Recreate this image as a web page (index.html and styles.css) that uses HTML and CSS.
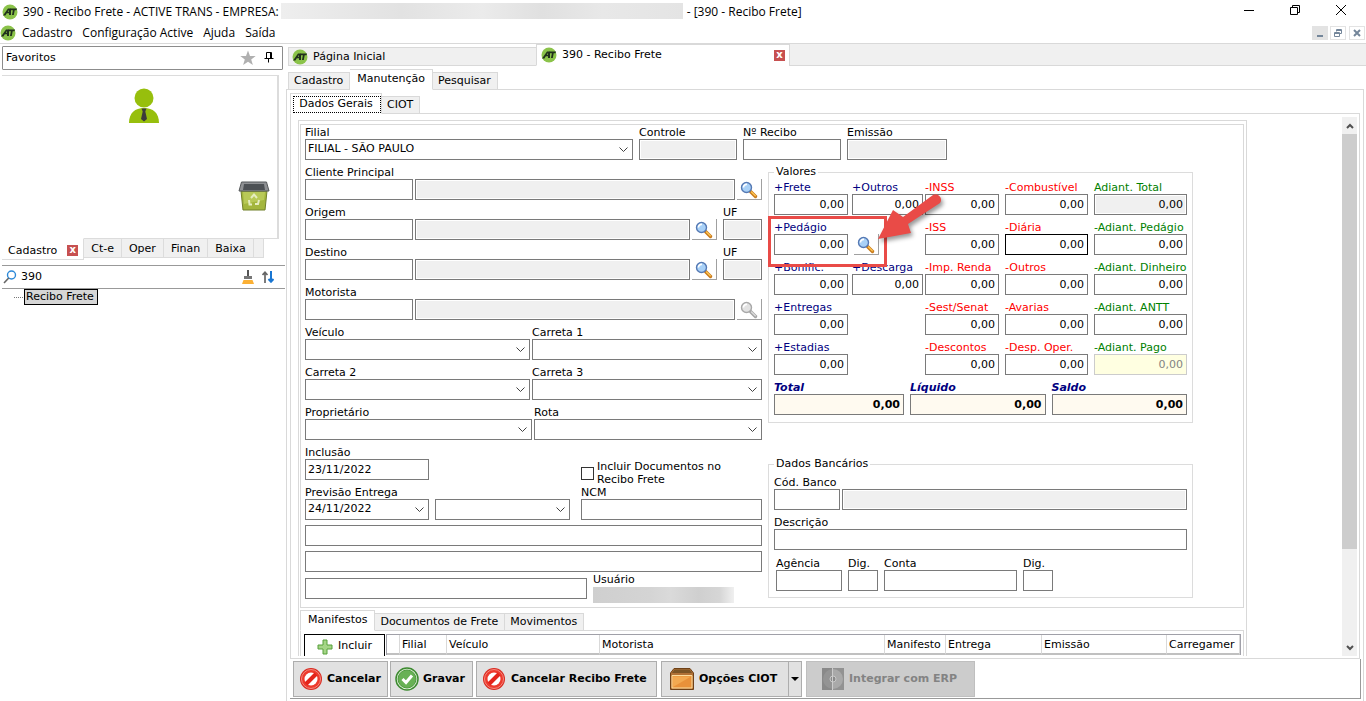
FILE: index.html
```html
<!DOCTYPE html>
<html lang="pt-BR">
<head>
    <meta charset="UTF-8">
    <meta name="viewport" content="width=device-width, initial-scale=1.0">
    <title>390 - Recibo Frete</title>
    <link rel="stylesheet" href="styles.css">
</head>
<body>
    <!-- shared icons -->
    <svg class="sprite" aria-hidden="true">
        <symbol id="logo" viewBox="0 0 16 16">
            <circle cx="8" cy="8" r="7.5" fill="#8bc34a"/>
            <path d="M1 11.5L6 4.500H9V11H7V9.300H4.800L3.400 11.500ZM5.800 7.800H7V6Z" fill="#20301c"/>
            <path d="M8.500 4.500H15L14.500 6.300H12.700L11.800 11H10L10.900 6.300H8.300Z" fill="#20301c"/>
        </symbol>
        <symbol id="lupa" viewBox="0 0 18 18">
            <path d="M10.500 10.500L15.500 15.500" stroke="#c87a1c" stroke-width="3.400" stroke-linecap="round"/>
            <path d="M11.500 11L15.300 14.800" stroke="#ffc653" stroke-width="1.300" stroke-linecap="round"/>
            <circle cx="6.500" cy="6.500" r="5" fill="#a9d1f7" stroke="#5579b4" stroke-width="1.400"/>
            <path d="M3.500 6.500A3 3 0 0 1 7 3.400" stroke="#fff" stroke-width="1.600" fill="none"/>
        </symbol>
        <symbol id="lupa-off" viewBox="0 0 18 18">
            <path d="M10.500 10.500L15.500 15.500" stroke="#a5a5a5" stroke-width="3.400" stroke-linecap="round"/>
            <path d="M11.500 11L15.300 14.800" stroke="#dcdcdc" stroke-width="1.300" stroke-linecap="round"/>
            <circle cx="6.500" cy="6.500" r="5" fill="#e2e2e2" stroke="#a8a8a8" stroke-width="1.400"/>
            <path d="M3.500 6.500A3 3 0 0 1 7 3.400" stroke="#fff" stroke-width="1.600" fill="none"/>
        </symbol>
        <symbol id="proibido" viewBox="0 0 24 24">
            <circle cx="12" cy="12" r="11" fill="#d92a20"/>
            <circle cx="12" cy="12" r="9.500" fill="#ee3a2d" stroke="#f58a80" stroke-width="1"/>
            <circle cx="12" cy="12" r="6.500" fill="#fff"/>
            <path d="M7 17L17 7" stroke="#e3241b" stroke-width="4"/>
        </symbol>
    </svg>

    <header class="titlebar">
        <svg class="logo"><use href="#logo"/></svg>
        <span>390 - Recibo Frete - ACTIVE TRANS - EMPRESA:</span>
        <span class="redacted"></span>
        <span>- [390 - Recibo Frete]</span>
        <div class="window-buttons">
            <button type="button" aria-label="Minimizar"><svg viewBox="0 0 12 12"><path d="M1 6.500H11"/></svg></button>
            <button type="button" aria-label="Restaurar"><svg viewBox="0 0 12 12"><path d="M1.500 3.500H8.500V10.500H1.500ZM3.500 3.500V1.500H10.500V8.500H8.500"/></svg></button>
            <button type="button" aria-label="Fechar"><svg viewBox="0 0 12 12"><path d="M1 1L11 11M11 1L1 11"/></svg></button>
        </div>
    </header>

    <nav class="menubar">
        <svg class="logo"><use href="#logo"/></svg>
        <a href="#">Cadastro</a>
        <a href="#">Configuração Active</a>
        <a href="#">Ajuda</a>
        <a href="#">Saída</a>
        <div class="mdi-buttons">
            <button type="button" class="flat" aria-label="Minimizar janela"><svg viewBox="0 0 12 12"><path d="M3 9H9"/></svg></button>
            <button type="button" aria-label="Restaurar janela"><svg viewBox="0 0 12 12"><path class="thin" d="M2.500 5.500H7.500V9.500H2.500ZM2.500 6.500H7.500M4.500 4.500V2.500H9.500V6.500H8M4.500 3.500H9.500"/></svg></button>
            <button type="button" class="last" aria-label="Fechar janela"><svg viewBox="0 0 12 12"><path d="M3 3L9 9M9 3L3 9"/></svg></button>
        </div>
    </nav>

    <main class="workspace">
        <aside class="sidebar">
            <div class="favorites-title">
                <span>Favoritos</span>
                <svg class="star" viewBox="0 0 16 16"><path d="M8 0.500L10 6H15.700L11.200 9.400L12.900 15L8 11.700L3.100 15L4.800 9.400L0.300 6H6Z" fill="#b0b0b0"/></svg>
                <svg class="pin" viewBox="0 0 10 12"><path d="M2.500 7.500V1.500H7.500V7.500M6.500 1.500V7.500M0.500 7.500H9.500M4.500 8V11.500" fill="none" stroke="#000"/></svg>
            </div>
            <div class="favorites">
                <svg class="person" viewBox="0 0 30 36">
                    <circle cx="15" cy="10" r="9.500" fill="#97bf0d"/>
                    <path d="M0 35C0 25 6 20 15 20S30 25 30 35Z" fill="#97bf0d"/>
                    <path d="M12.500 20.500H17.500L16.300 23.500L18 31L15 33.500L12 31L13.700 23.500Z" fill="#3c3c3b"/>
                </svg>
                <svg class="bin" viewBox="0 0 32 32">
                    <path d="M3 11H29L27 30H5Z" fill="#a3b63d" stroke="#71802a"/>
                    <path d="M5 12H27L26 20L6 24Z" fill="#b8c957"/>
                    <path d="M3.500 2H28.500L31 11H1Z" fill="#8f9194" stroke="#55585a"/>
                    <path d="M6 4H26L27 10H5Z" fill="#4d5155"/>
                    <path d="M13 18L16 14.500L19 18M21 20L20 24H17M14 24.500H11.500L11 20" fill="none" stroke="#e6edc0" stroke-width="2"/>
                </svg>
            </div>
            <div class="group-tabs">
                <button type="button" class="active">Cadastro <span class="close">x</span></button>
                <button type="button">Ct-e</button>
                <button type="button">Oper</button>
                <button type="button">Finan</button>
                <button type="button">Baixa</button>
                <span class="tab-end"></span>
            </div>
            <div class="search">
                <svg class="search-icon" viewBox="0 0 14 14"><circle cx="8.500" cy="5" r="4" fill="none" stroke="#2b88d8" stroke-width="1.400"/><path d="M5.700 8L1 13" stroke="#666" stroke-width="1.600"/></svg>
                <input type="text" aria-label="Buscar" value="390">
                <svg class="broom" viewBox="0 0 12 14"><path d="M6 0V6" stroke="#555" stroke-width="2"/><path d="M2 6H10V9H2Z" fill="#777"/><path d="M1.500 10H10.500L12 14H0Z" fill="#fbb034"/></svg>
                <svg class="sort" viewBox="0 0 12 12"><path d="M3 12V1.500M0.500 4L3 1.300L5.500 4" fill="none" stroke="#666" stroke-width="1.700"/><path d="M9 0V10.500M6.500 8L9 10.700L11.500 8" fill="none" stroke="#1976d2" stroke-width="2"/></svg>
            </div>
            <div class="tree"><span class="branch"></span><a href="#">Recibo Frete</a></div>
        </aside>

        <section class="content">
            <div class="doc-tabs">
                <button type="button"><svg class="logo"><use href="#logo"/></svg>Página Inicial</button>
                <button type="button" class="active"><svg class="logo"><use href="#logo"/></svg>390 - Recibo Frete<span class="close">x</span></button>
                <span class="filler"></span>
            </div>
            <div class="tabs">
                <button type="button">Cadastro</button>
                <button type="button" class="active">Manutenção</button>
                <button type="button">Pesquisar</button>
            </div>
            <div class="frame">
                <div class="tabs sub">
                    <button type="button" class="active focus">Dados Gerais</button>
                    <button type="button">CIOT</button>
                </div>
                <div class="page">
                    <div class="viewport">
                        <div class="sheet">
                            <form class="form">
                                <div class="row wide">
                                    <label class="w-filial">Filial<select><option>FILIAL - SÃO PAULO</option></select></label>
                                    <label class="w-small">Controle<input type="text" readonly></label>
                                    <label class="w-small">Nº Recibo<input type="text"></label>
                                    <label class="w-date">Emissão<input type="text" readonly></label>
                                </div>
                                <div class="columns">
                                    <div class="left">
                                        <div class="row">
                                            <label class="w-code">Cliente Principal<input type="text"></label>
                                            <input class="grow" type="text" aria-label="Nome do cliente" readonly>
                                            <button type="button" class="find" aria-label="Procurar cliente"><svg><use href="#lupa"/></svg></button>
                                        </div>
                                        <div class="row">
                                            <label class="w-code">Origem<input type="text"></label>
                                            <input class="grow" type="text" aria-label="Cidade de origem" readonly>
                                            <button type="button" class="find" aria-label="Procurar origem"><svg><use href="#lupa"/></svg></button>
                                            <label class="w-uf">UF<input type="text" readonly></label>
                                        </div>
                                        <div class="row">
                                            <label class="w-code">Destino<input type="text"></label>
                                            <input class="grow" type="text" aria-label="Cidade de destino" readonly>
                                            <button type="button" class="find" aria-label="Procurar destino"><svg><use href="#lupa"/></svg></button>
                                            <label class="w-uf">UF<input type="text" readonly></label>
                                        </div>
                                        <div class="row">
                                            <label class="w-code">Motorista<input type="text"></label>
                                            <input class="grow" type="text" aria-label="Nome do motorista" readonly>
                                            <button type="button" class="find" aria-label="Procurar motorista" disabled><svg><use href="#lupa-off"/></svg></button>
                                        </div>
                                        <div class="row">
                                            <label class="w-combo">Veículo<select></select></label>
                                            <label class="grow">Carreta 1<select></select></label>
                                        </div>
                                        <div class="row">
                                            <label class="w-combo">Carreta 2<select></select></label>
                                            <label class="grow">Carreta 3<select></select></label>
                                        </div>
                                        <div class="row">
                                            <label class="w-owner">Proprietário<select></select></label>
                                            <label class="grow">Rota<select></select></label>
                                        </div>
                                        <div class="row include">
                                            <label class="w-day">Inclusão<input type="text" value="23/11/2022"></label>
                                            <label class="check w-ncm"><input type="checkbox"><span>Incluir Documentos no Recibo Frete</span></label>
                                        </div>
                                        <div class="row spaced">
                                            <label class="w-day">Previsão Entrega<select><option>24/11/2022</option></select></label>
                                            <select class="w-period" aria-label="Período"></select>
                                            <label class="w-ncm">NCM<input type="text"></label>
                                        </div>
                                        <input type="text" aria-label="Observação 1">
                                        <input type="text" aria-label="Observação 2">
                                        <div class="row user-row">
                                            <input class="w-note" type="text" aria-label="Observação 3">
                                            <div class="user">Usuário<span class="redacted"></span></div>
                                        </div>
                                    </div>
                                    <div class="right">
                                        <fieldset class="values">
                                            <legend>Valores</legend>
                                            <div class="grid">
                                                <label class="plus">+Frete<input type="text" value="0,00"></label>
                                                <label class="plus c2">+Outros<input type="text" value="0,00"></label>
                                                <label class="minus c3">-INSS<input type="text" value="0,00"></label>
                                                <label class="minus c4">-Combustível<input type="text" value="0,00"></label>
                                                <label class="adv">Adiant. Total<input type="text" value="0,00" readonly></label>

                                                <label class="plus">+Pedágio<input type="text" value="0,00"></label>
                                                <button type="button" class="find" aria-label="Procurar pedágio"><svg><use href="#lupa"/></svg></button>
                                                <label class="minus c3">-ISS<input type="text" value="0,00"></label>
                                                <label class="minus c4 current">-Diária<input type="text" value="0,00"></label>
                                                <label class="adv">-Adiant. Pedágio<input type="text" value="0,00"></label>

                                                <label class="plus">+Bonific.<input type="text" value="0,00"></label>
                                                <label class="plus c2">+Descarga<input type="text" value="0,00"></label>
                                                <label class="minus c3">-Imp. Renda<input type="text" value="0,00"></label>
                                                <label class="minus c4">-Outros<input type="text" value="0,00"></label>
                                                <label class="adv">-Adiant. Dinheiro<input type="text" value="0,00"></label>

                                                <label class="plus">+Entregas<input type="text" value="0,00"></label>
                                                <label class="minus c3">-Sest/Senat<input type="text" value="0,00"></label>
                                                <label class="minus c4">-Avarias<input type="text" value="0,00"></label>
                                                <label class="adv">-Adiant. ANTT<input type="text" value="0,00"></label>

                                                <label class="plus">+Estadias<input type="text" value="0,00"></label>
                                                <label class="minus c3">-Descontos<input type="text" value="0,00"></label>
                                                <label class="minus c4">-Desp. Oper.<input type="text" value="0,00"></label>
                                                <label class="adv">-Adiant. Pago<input type="text" value="0,00" disabled></label>
                                            </div>
                                            <div class="totals">
                                                <label class="total">Total<input type="text" value="0,00"></label>
                                                <label>Líquido<input type="text" value="0,00"></label>
                                                <label>Saldo<input type="text" value="0,00"></label>
                                            </div>
                                            <div class="highlight"></div>
                                            <svg class="arrow" viewBox="0 0 76 60"><path d="M3 49L18 20L28 27L58 5A5.500 5.500 0 0 1 65 13L33 34L36 43Z" fill="#e94b47"/></svg>
                                        </fieldset>
                                        <fieldset class="bank">
                                            <legend>Dados Bancários</legend>
                                            <div class="row">
                                                <label class="w-bank">Cód. Banco<input type="text"></label>
                                                <input class="grow" type="text" aria-label="Nome do banco" readonly>
                                            </div>
                                            <label>Descrição<input type="text"></label>
                                            <div class="row spaced account">
                                                <label class="w-bank">Agência<input type="text"></label>
                                                <label class="w-digit">Dig.<input type="text"></label>
                                                <label class="w-account">Conta<input type="text"></label>
                                                <label class="w-digit">Dig.<input type="text"></label>
                                            </div>
                                        </fieldset>
                                    </div>
                                </div>
                            </form>
                            <div class="tabs lower">
                                <button type="button" class="active">Manifestos</button>
                                <button type="button">Documentos de Frete</button>
                                <button type="button">Movimentos</button>
                            </div>
                            <div class="manifests">
                                <button type="button" class="add">
                                    <svg viewBox="0 0 16 16"><path d="M6 1H10V6H15V10H10V15H6V10H1V6H6Z" fill="#a5d587" stroke="#57a03a"/></svg>Incluir
                                </button>
                                <table>
                                    <colgroup><col class="c-mark"><col class="c-filial"><col class="c-vehicle"><col><col class="c-manifest"><col class="c-delivery"><col class="c-issue"><col class="c-load"></colgroup>
                                    <thead>
                                        <tr><th></th><th>Filial</th><th>Veículo</th><th>Motorista</th><th>Manifesto</th><th>Entrega</th><th>Emissão</th><th>Carregamer</th></tr>
                                    </thead>
                                </table>
                            </div>
                        </div>
                    </div>
                    <div class="scrollbar">
                        <button type="button" aria-label="Rolar para cima"><svg viewBox="0 0 8 6"><path d="M1 5L4 2L7 5"/></svg></button>
                        <span class="thumb"></span>
                        <button type="button" aria-label="Rolar para baixo"><svg viewBox="0 0 8 6"><path d="M1 1L4 4L7 1"/></svg></button>
                    </div>
                </div>
                <div class="actions">
                    <button type="button" class="cancel"><svg viewBox="0 0 24 24"><use href="#proibido"/></svg>Cancelar</button>
                    <button type="button" class="save"><svg viewBox="0 0 24 24"><circle cx="12" cy="12" r="11" fill="#e6f3df" stroke="#3c8a2f" stroke-width="1.500"/><circle cx="12" cy="12" r="9" fill="#68b155" stroke="#4d9a3e"/><path d="M7.500 12L11 15.500L17 8.500" fill="none" stroke="#fff" stroke-width="3"/></svg>Gravar</button>
                    <button type="button" class="cancel-receipt"><svg viewBox="0 0 24 24"><use href="#proibido"/></svg>Cancelar Recibo Frete</button>
                    <div class="split">
                        <button type="button" class="options"><svg viewBox="0 0 24 24"><path d="M4 1.500H20L23.500 6V22.500H0.500V6Z" fill="#b07136" stroke="#6f4117"/><path d="M4.500 2.500H19.500L22 6H2Z" fill="#7a5426"/><path d="M2 8.500H22V21H2Z" fill="#e8913a" stroke="#fbdc9e"/><path d="M3 9.500H21L3 20Z" fill="#f2a951"/></svg>Opções CIOT</button>
                        <button type="button" class="drop" aria-label="Mais opções"><svg viewBox="0 0 8 4"><path d="M0 0H8L4 4Z"/></svg></button>
                    </div>
                    <button type="button" class="erp" disabled><svg viewBox="0 0 24 24"><path d="M1 1H23V23H1Z" fill="#929292"/><circle cx="12" cy="12" r="10" fill="#a9a9a9"/><path d="M1 1H11V23H1Z" fill="#808080" opacity="0.500"/><circle cx="12" cy="12" r="3" fill="#8a8a8a" stroke="#c8c8c8"/><path d="M11.500 1V23" stroke="#ccc"/></svg>Integrar com ERP</button>
                </div>
            </div>
        </section>
    </main>
</body>
</html>
```
FILE: styles.css
```css
* {
    box-sizing: border-box;
}
body {
    margin: 0;
    height: 100vh;
    display: flex;
    flex-direction: column;
    overflow: hidden;
    background: #fff;
    color: #000;
    font-family: "DejaVu Sans", Verdana, sans-serif;
    font-size: 11px;
    line-height: 14px;
}
button, input, select {
    font: inherit;
    color: inherit;
    margin: 0;
    border-radius: 0;
}
button {
    padding: 0;
    border: 0;
    background: none;
    white-space: nowrap;
}
a {
    color: inherit;
    text-decoration: none;
}
svg {
    display: block;
    flex: none;
}
.sprite {
    position: absolute;
    width: 0;
    height: 0;
}
.logo {
    width: 16px;
    height: 16px;
}
.close {
    width: 11px;
    height: 11px;
    background: #c75050;
    color: #fff;
    font-size: 10px;
    font-weight: bold;
    line-height: 9px;
    text-align: center;
}
.redacted {
    background: linear-gradient(90deg, #eee, #e2e2e2 30%, #ebebeb 50%, #e0e0e0 65%, #e8e8e8 80%, #e4e4e4);
}

/* title and menu */
.titlebar, .menubar {
    display: flex;
    align-items: center;
    font-family: "Open Sans", "Segoe UI", sans-serif;
    font-size: 12px;
    white-space: nowrap;
}
.titlebar {
    height: 23px;
    padding-left: 2px;
}
.titlebar .logo {
    margin-right: 5px;
}
.titlebar .redacted {
    width: 402px;
    height: 16px;
    margin: 0 4px 2px 2px;
}
.window-buttons {
    display: flex;
    margin: 0 2px 3px auto;
    align-self: stretch;
}
.window-buttons button {
    width: 46px;
    display: grid;
    place-items: center;
}
.window-buttons svg {
    width: 12px;
    height: 12px;
    fill: none;
    stroke: #000;
}
.menubar {
    height: 20px;
    gap: 10px;
}
.menubar .logo {
    margin-right: -4px;
}
.mdi-buttons {
    display: flex;
    gap: 2px;
    margin-left: auto;
    padding-right: 1px;
}
.mdi-buttons button {
    width: 16px;
    height: 14px;
    border: 1px solid #e3e3e3;
    display: grid;
    place-items: center;
}
.mdi-buttons .flat {
    background: #e3e3e3;
}
.mdi-buttons .last {
    margin-left: 1px;
}
.mdi-buttons svg {
    width: 12px;
    height: 12px;
    fill: none;
    stroke: #74869a;
    stroke-width: 2;
}
.mdi-buttons .thin {
    stroke-width: 1;
}

.workspace {
    flex: 1;
    min-height: 0;
    display: flex;
    border-top: 1px solid #d9d9d9;
}

/* sidebar */
.sidebar {
    width: 286px;
    flex: none;
    padding: 2px 2px 0 2px;
}
.favorites-title {
    height: 24px;
    margin-right: 1px;
    padding: 0 8px 0 3px;
    display: flex;
    align-items: center;
    border: 1px solid #8c8c8c;
    border-radius: 1px;
}
.star {
    width: 16px;
    height: 16px;
    margin-left: auto;
}
.pin {
    width: 10px;
    height: 12px;
    margin: 0 0 2px 8px;
}
.favorites {
    height: 164px;
    margin: 5px 5px 0 0;
    padding: 12px 7px 26px 0;
    display: flex;
    flex-direction: column;
    align-items: center;
    justify-content: space-between;
    border: solid #dcdcdc;
    border-width: 1px 2px 1px 0;
}
.person {
    width: 30px;
    height: 36px;
    margin-left: 16px;
}
.bin {
    width: 32px;
    height: 32px;
    align-self: flex-end;
}
.group-tabs {
    display: flex;
    align-items: flex-start;
    margin-top: -1px;
}
.group-tabs button {
    height: 20px;
    padding: 1px 7px 0;
    background: #f0f0f0;
    border: solid #dcdcdc;
    border-width: 1px 1px 1px 0;
}
.group-tabs .active {
    height: 22px;
    display: flex;
    align-items: center;
    gap: 10px;
    padding: 3px 5px 0 6px;
    background: #fff;
    border-top-color: #fff;
}
.tab-end {
    width: 10px;
    height: 20px;
    background: #f0f0f0;
    border: 1px solid #dcdcdc;
    border-left: 0;
}
.search {
    height: 24px;
    margin: 5px -1px 0 0;
    padding: 0 11px 0 1px;
    display: flex;
    align-items: center;
    border: solid #999;
    border-width: 1px 0;
}
.search-icon {
    width: 14px;
    height: 14px;
}
.broom {
    width: 12px;
    height: 14px;
    margin-right: 8px;
}
.sort {
    width: 12px;
    height: 12px;
}
.tree {
    display: flex;
    align-items: center;
    padding-left: 12px;
}
.branch {
    width: 9px;
    margin-right: 1px;
    border-top: 1px dotted #777;
}
.tree a {
    padding: 0 3px 0 1px;
    background: #d6d6d6;
    border: 1px solid #000;
}

/* document tabs */
.content {
    flex: 1;
    min-width: 0;
    display: flex;
    flex-direction: column;
}
.doc-tabs {
    height: 22px;
    display: flex;
    align-items: flex-end;
    margin-left: 2px;
}
.doc-tabs button {
    height: 19px;
    width: 248px;
    padding: 0 4px 0 3px;
    display: flex;
    align-items: center;
    gap: 5px;
    background: #f0f0f0;
    border: 1px solid #d9d9d9;
    border-right: 0;
}
.doc-tabs .active {
    height: 22px;
    width: 253px;
    padding-left: 4px;
    background: #fff;
    border-bottom-color: #fff;
}
.doc-tabs .close {
    margin-left: auto;
}
.doc-tabs .filler {
    flex: 1;
    align-self: stretch;
    background: #f0f0f0;
    border: solid #d9d9d9;
    border-width: 0 0 1px 1px;
}

/* tabs and frames */
.tabs {
    display: flex;
    align-items: flex-end;
    margin-bottom: -1px;
    position: relative;
}
.tabs button {
    height: 18px;
    padding: 0 6px 0 5px;
    background: #f0f0f0;
    border: 1px solid #d9d9d9;
    border-left: 0;
}
.tabs .active {
    height: 21px;
    padding: 0 7px 1px;
    background: #fff;
    border-bottom-color: #fff;
}
.tabs button:first-child {
    border-left: 1px solid #d9d9d9;
}
.content > .tabs {
    margin: 3px 0 -1px 2px;
}
.frame {
    flex: 1;
    min-height: 0;
    margin-right: 2px;
    padding: 3px 3px 0;
    display: flex;
    flex-direction: column;
    border: 1px solid #d9d9d9;
    border-bottom: 0;
}
.tabs .focus {
    padding: 0 2px;
}
.focus::before {
    content: "";
    position: absolute;
    left: 3px;
    top: 3px;
    width: 86px;
    height: 15px;
    border: 1px dotted #000;
}
.sub .focus {
    width: 92px;
}
.page {
    flex: 1;
    min-height: 0;
    display: flex;
    padding-bottom: 2px;
    border: 1px solid #d9d9d9;
}
.viewport {
    flex: 1;
    min-width: 0;
    padding: 6px 0 0 7px;
    overflow: hidden;
}
.sheet {
    width: 949px;
    padding: 3px 2px 20px 1px;
    border: 1px solid #d9d9d9;
}
.form {
    padding: 0 50px 8px 4px;
    border: 1px solid #d9d9d9;
}
.scrollbar {
    width: 15px;
    margin: 3px 2px 0 0;
    display: flex;
    flex-direction: column;
    background: #f0f0f0;
}
.scrollbar button {
    height: 17px;
    display: grid;
    place-items: center;
}
.scrollbar button:last-child {
    margin-top: auto;
}
.scrollbar svg {
    width: 8px;
    height: 6px;
    fill: none;
    stroke: #505050;
    stroke-width: 2;
}
.thumb {
    height: 77%;
    background: #cdcdcd;
}

/* fields */
label {
    display: flex;
    flex-direction: column;
    padding-top: 2px;
    line-height: 12px;
    white-space: nowrap;
}
input[type="text"], select {
    width: 100%;
    height: 21px;
    padding: 0 2px 1px;
    line-height: 18px;
    background: #fff;
    border: 1px solid #7a7a7a;
    outline: 0;
}
input[type="text"][readonly] {
    background: #f0f0f0;
    box-shadow: inset 0 0 0 1px #fff;
}
.search input[type="text"] {
    flex: 1;
    width: 0;
    padding: 0 4px 1px;
    border: 0;
}
select {
    appearance: none;
    background: #fff url("data:image/svg+xml,%3Csvg xmlns='http://www.w3.org/2000/svg' width='9' height='6'%3E%3Cpath d='M.5.500L4.500 4.500L8.500.5' fill='none' stroke='%23404040'/%3E%3C/svg%3E") no-repeat right 4px center;
}
.row {
    display: flex;
    align-items: flex-end;
    gap: 2px;
}
.row > * {
    flex: none;
}
.row > .grow {
    flex: 1;
    width: 0;
}
.wide {
    gap: 6px;
}
.spaced {
    gap: 6px;
}
.columns {
    display: flex;
    gap: 6px;
    margin-top: 5px;
}
.left {
    flex: 457;
    min-width: 0;
    display: flex;
    flex-direction: column;
    gap: 5px;
}
.right {
    flex: 425;
    min-width: 0;
}
.w-filial { width: 328px; }
.w-small { width: 98px; }
.w-date { width: 100px; }
.w-code { width: 108px; }
.w-uf { width: 39px; margin-left: 4px; }
.w-combo { width: 225px; }
.w-owner { width: 227px; }
.w-day { width: 124px; }
.row .w-period { width: 135px; }
.w-ncm { width: 181px; margin-left: auto; }
.row .w-note { width: 282px; }
.w-bank { width: 66px; }
.w-digit { width: 30px; }
.w-account { width: 133px; }
.find {
    width: 25px;
    height: 21px;
    padding: 1px 0 0 3px;
    border: solid #a0a0a0;
    border-width: 0 1px 1px 0;
}
.find svg {
    width: 18px;
    height: 18px;
}
.include {
    height: 35px;
    align-items: flex-start;
}
.check {
    flex-direction: row;
    align-items: center;
    gap: 3px;
    padding-top: 15px;
    line-height: 13px;
    white-space: normal;
}
.check span {
    width: 140px;
}
.check input {
    appearance: none;
    flex: none;
    width: 13px;
    height: 13px;
    border: 1px solid #333;
}
.user-row {
    height: 21px;
    margin-top: 1px;
    gap: 6px;
    align-items: flex-start;
}
.user {
    width: 141px;
    margin-top: -5px;
}
.user .redacted {
    display: block;
    height: 16px;
    background: linear-gradient(90deg, #cfcfcf, #d4d4d4 40%, #dadada 55%, #cfcfcf 75%, #d6d6d6 90%, #f0f0f0);
}

/* values */
fieldset {
    min-width: 0;
    margin: 0;
    padding: 1px 5px 7px;
    position: relative;
    border: 1px solid #dcdcdc;
}
legend {
    padding: 0 2px;
}
.grid {
    display: grid;
    grid-template-columns: 78px 73px 80px 89px 93px;
    row-gap: 5px;
    align-items: end;
}
.grid input[type="text"], .totals input[type="text"] {
    padding-right: 3px;
    text-align: right;
}
.plus { width: 74px; color: #000080; }
.c2 { width: 71px; }
.minus { color: #f00; }
.c3 { grid-column: 3; width: 74px; }
.c4 { width: 83px; }
.adv { color: #008000; }
.grid input[type="text"] {
    color: #000;
}
.grid .current input {
    border-color: #000;
}
.grid input[type="text"]:disabled {
    color: #838383;
    background: #ffffe1;
    border-color: #ccc;
}
.grid .find {
    margin-left: 2px;
}
.totals {
    display: flex;
    gap: 6px;
    margin-top: 5px;
    font-weight: bold;
}
.totals label {
    flex: 1;
    color: #000080;
    font-style: italic;
}
.totals .total {
    flex: none;
    width: 130px;
}
.totals input[type="text"] {
    color: #000;
    font-style: normal;
    background: #fffaf0;
}
.highlight {
    position: absolute;
    left: -1px;
    top: 37px;
    width: 119px;
    height: 51px;
    border: 3px solid #e94b47;
}
.arrow {
    position: absolute;
    left: 106px;
    top: 11px;
    width: 76px;
    height: 60px;
    filter: drop-shadow(2px 3px 2px rgba(0, 0, 0, 0.4));
}
.bank {
    margin-top: 34px;
    padding-top: 4px;
    padding-bottom: 6px;
}
.bank > label {
    margin: 5px 0;
}
.account {
    padding: 1px 0 0 2px;
}

/* manifests */
.lower {
    margin-top: 2px;
}
.manifests {
    display: flex;
    height: 60px;
    padding: 3px 2px 0 3px;
    border: 1px solid #d9d9d9;
}
.add {
    width: 81px;
    display: flex;
    justify-content: center;
    gap: 5px;
    padding-top: 4px;
    border: 1px solid #000;
}
.add svg {
    width: 16px;
    height: 16px;
}
.manifests table {
    flex: 1;
    width: 0;
    height: 20px;
    margin-left: 1px;
    table-layout: fixed;
    border-collapse: separate;
    border-spacing: 0;
    border: 1px solid #a0a0a8;
    border-bottom: 0;
}
th {
    height: 20px;
    padding: 1px 0 0 2px;
    border-right: 1px solid #d9d9d9;
    border-bottom: 2px solid #c0c0c0;
    font-weight: normal;
    text-align: left;
    white-space: nowrap;
}
.c-mark { width: 13px; }
.c-filial { width: 47px; }
.c-vehicle { width: 153px; }
.c-manifest { width: 61px; }
.c-delivery { width: 96px; }
.c-issue { width: 125px; }
.c-load { width: 73px; }

/* bottom buttons */
.actions {
    height: 40px;
    margin: 0 -1px 2px 0;
    padding: 2px 2px 0 3px;
    display: flex;
    border: solid #999;
    border-width: 0 1px 1px 0;
    font-size: 11px;
    font-weight: bold;
}
.actions button {
    height: 36px;
    padding: 0 0 0 5px;
    display: flex;
    align-items: center;
    gap: 4px;
    background: #e1e1e1;
    border: 1px solid #adadad;
}
.actions svg {
    width: 24px;
    height: 24px;
}
.actions .cancel {
    width: 95px;
    margin-right: 2px;
}
.actions .save {
    width: 83px;
    padding-left: 4px;
    margin-right: 3px;
}
.actions .cancel-receipt {
    width: 181px;
    gap: 5px;
}
.split {
    display: flex;
    margin: 0 4px;
}
.actions .options {
    width: 128px;
    padding-left: 8px;
    gap: 5px;
}
.actions .drop {
    width: 13px;
    padding: 0;
    justify-content: center;
    border-left: 0;
}
.actions .drop svg {
    width: 8px;
    height: 4px;
}
.actions .erp {
    width: 169px;
    padding-left: 14px;
    color: #838383;
    background: #ccc;
    border-color: #bfbfbf;
}
```
